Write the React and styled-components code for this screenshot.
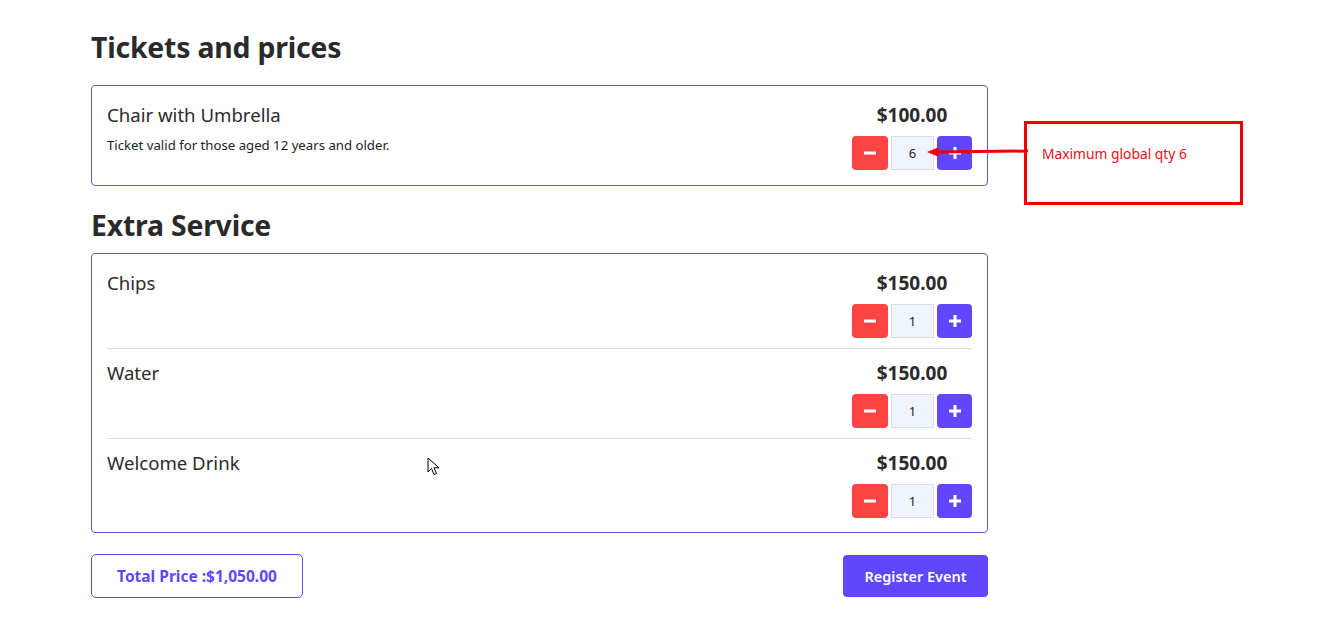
import React, { useState } from "react";
import styled, { createGlobalStyle } from "styled-components";

const Global = createGlobalStyle`
  html, body { margin: 0; padding: 0; background: #fff; }
  body { font-family: "Noto Sans", "Open Sans", sans-serif; color: #2b2b2b; }
  * { box-sizing: border-box; }
`;

const Page = styled.div`
  position: relative;
  width: 1320px;
  height: 621px;
  padding: 27px 0 0 91px;
`;

const Column = styled.div`
  width: 897px;
  display: flex;
  flex-direction: column;
`;

const Heading = styled.h2`
  margin: ${(p) => p.$mt}px 0 ${(p) => p.$mb}px;
  font-size: 28.4px;
  line-height: 40px;
  font-weight: 700;
  color: #2a2a2a;
  letter-spacing: -0.2px;
`;

const Card = styled.div`
  border: 1px solid #6a55e8;
  border-radius: 4px;
  padding: 5px 15px ${(p) => p.$pb}px 15px;
`;

const Row = styled.div`
  display: flex;
  justify-content: space-between;
  align-items: flex-start;
  padding: 12px 0 10px;
  border-bottom: 1px solid #dedede;
  &:last-child { border-bottom: none; }
`;

const Info = styled.div`
  display: flex;
  flex-direction: column;
`;

const Title = styled.div`
  font-size: 18.6px;
  line-height: 24px;
  font-weight: 400;
  color: #2b2b2b;
`;

const Desc = styled.div`
  margin-top: 9px;
  font-size: 13.2px;
  line-height: 18px;
  color: #222;
`;

const Right = styled.div`
  display: flex;
  flex-direction: column;
  align-items: center;
  gap: 9px;
`;

const Price = styled.div`
  font-size: 19px;
  line-height: 24px;
  font-weight: 700;
  color: #2b2b2b;
`;

const Qty = styled.div`
  display: flex;
  gap: 3px;
`;

const QtyBtn = styled.button`
  width: ${(p) => (p.$plus ? 35 : 36)}px;
  height: 34px;
  border: none;
  border-radius: 4px;
  background: ${(p) => (p.$plus ? "#6046fd" : "#fd4444")};
  display: flex;
  align-items: center;
  justify-content: center;
  padding: 0;
  cursor: pointer;
`;

const QtyInput = styled.div`
  width: 43px;
  height: 34px;
  border: 1px solid #dadde3;
  background: #f0f4fd;
  font-size: 13px;
  color: #222;
  display: flex;
  align-items: center;
  justify-content: center;
`;

const Footer = styled.div`
  margin-top: 21px;
  display: flex;
  justify-content: space-between;
  align-items: center;
`;

const TotalBox = styled.div`
  width: 212px;
  height: 44px;
  border: 1px solid #6046fd;
  border-radius: 5px;
  color: #6046fd;
  font-weight: 700;
  font-size: 15.5px;
  display: flex;
  align-items: center;
  justify-content: center;
`;

const RegisterBtn = styled.button`
  width: 145px;
  height: 42px;
  border: none;
  border-radius: 4px;
  background: #6046fd;
  color: #fff;
  font-family: inherit;
  font-weight: 600;
  font-size: 14.5px;
  cursor: pointer;
`;

const Note = styled.div`
  position: absolute;
  left: 1024px;
  top: 121px;
  width: 219px;
  height: 84px;
  border: 3px solid #f00000;
  padding: 20px 0 0 15px;
  font-size: 13.8px;
  color: #e81010;
  font-family: "Noto Sans", sans-serif;
`;

const Arrow = styled.svg`
  position: absolute;
  left: 926px;
  top: 144px;
  overflow: visible;
`;

const Cursor = styled.svg`
  position: absolute;
  left: 427px;
  top: 457px;
`;

const Minus = () => (
  <svg width="14" height="14" viewBox="0 0 14 14">
    <rect x="1" y="5.5" width="12" height="3" fill="#fff" />
  </svg>
);
const Plus = () => (
  <svg width="14" height="14" viewBox="0 0 14 14">
    <rect x="1" y="5.5" width="12" height="3" fill="#fff" />
    <rect x="5.5" y="1" width="3" height="12" fill="#fff" />
  </svg>
);

function Counter({ value }) {
  const [v, setV] = useState(value);
  return (
    <Qty>
      <QtyBtn onClick={() => setV(Math.max(0, v - 1))}><Minus /></QtyBtn>
      <QtyInput>{v}</QtyInput>
      <QtyBtn $plus onClick={() => setV(v + 1)}><Plus /></QtyBtn>
    </Qty>
  );
}

function Item({ title, desc, price, qty }) {
  return (
    <Row>
      <Info>
        <Title>{title}</Title>
        {desc && <Desc>{desc}</Desc>}
      </Info>
      <Right>
        <Price>{price}</Price>
        <Counter value={qty} />
      </Right>
    </Row>
  );
}

export default function App() {
  return (
    <Page>
      <Global />
      <Column>
        <Heading $mt={0} $mb={18}>Tickets and prices</Heading>
        <Card $pb={5}>
          <Item title="Chair with Umbrella" desc="Ticket valid for those aged 12 years and older." price="$100.00" qty={6} />
        </Card>
        <Heading $mt={19} $mb={8}>Extra Service</Heading>
        <Card $pb={4}>
          <Item title="Chips" price="$150.00" qty={1} />
          <Item title="Water" price="$150.00" qty={1} />
          <Item title="Welcome Drink" price="$150.00" qty={1} />
        </Card>
        <Footer>
          <TotalBox>Total Price :$1,050.00</TotalBox>
          <RegisterBtn>Register Event</RegisterBtn>
        </Footer>
      </Column>
      <Arrow width="104" height="16">
        <line x1="10" y1="8" x2="102" y2="7" stroke="#f00000" strokeWidth="3" />
        <polygon points="1,8 13,3 13,13" fill="#f00000" />
      </Arrow>
      <Note>Maximum global qty 6</Note>
      <Cursor width="14" height="20" viewBox="0 0 14 20">
        <path d="M1 1 L1 15 L4.5 11.5 L7 17.5 L9.5 16.5 L7 10.8 L12 10.8 Z" fill="#fff" stroke="#000" strokeWidth="1" strokeLinejoin="round" />
      </Cursor>
    </Page>
  );
}
